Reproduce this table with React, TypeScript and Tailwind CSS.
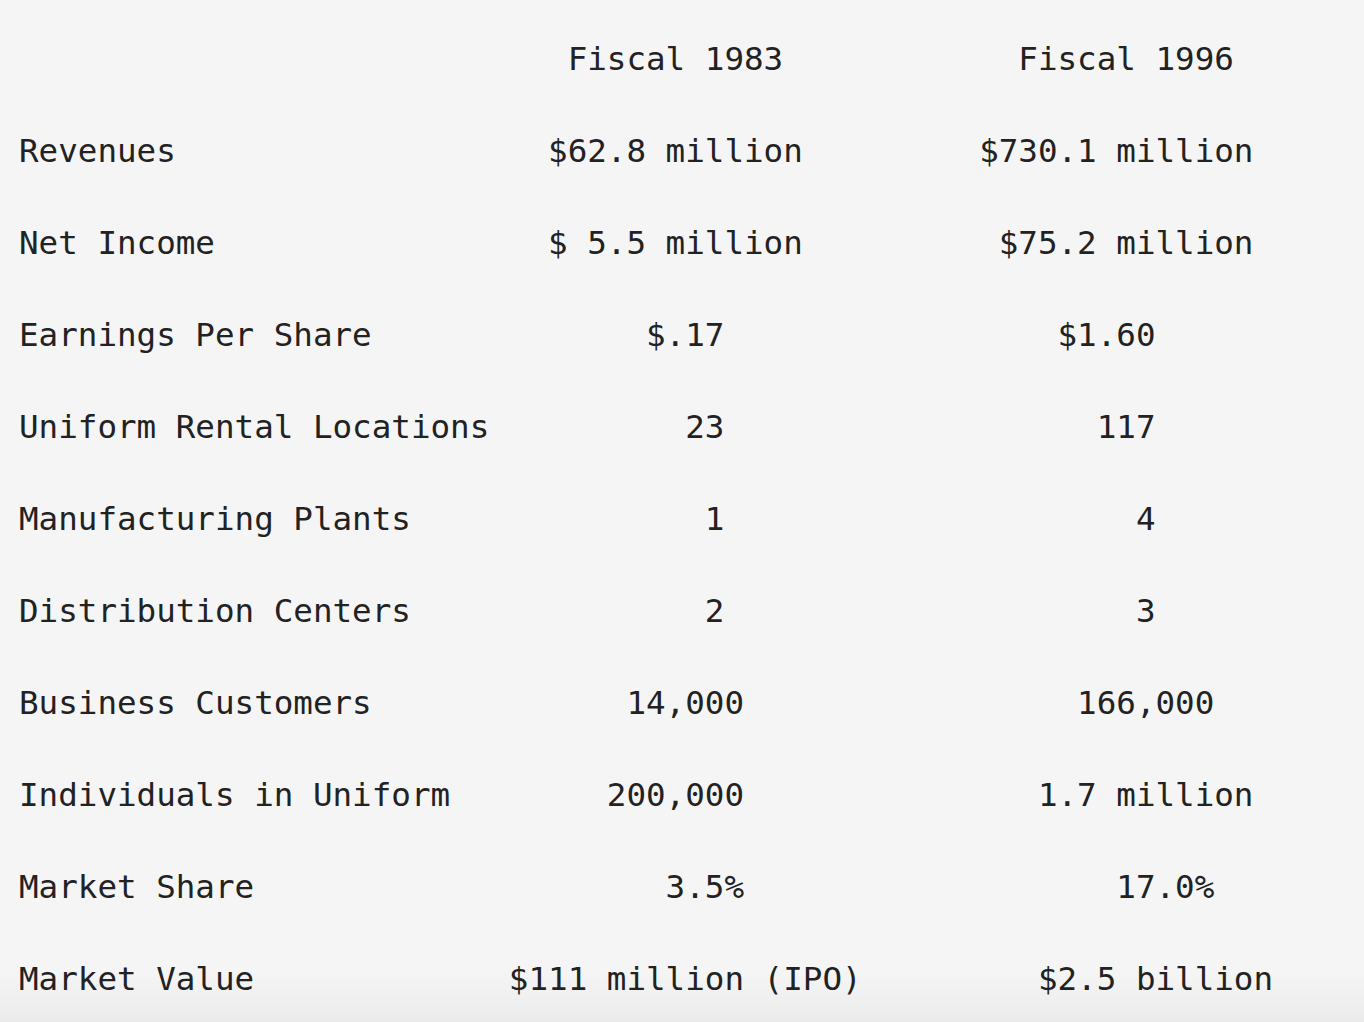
import React from "react";

type Row = { label: string; a: string; b: string };

// column text is padded with spaces, the way the original monospace table was typed
const rows: Row[] = [
    { label: "", a: "   Fiscal 1983", b: "  Fiscal 1996" },
    { label: "Revenues", a: "  $62.8 million", b: "$730.1 million" },
    { label: "Net Income", a: "  $ 5.5 million", b: " $75.2 million" },
    { label: "Earnings Per Share", a: "       $.17", b: "    $1.60" },
    { label: "Uniform Rental Locations", a: "         23", b: "      117" },
    { label: "Manufacturing Plants", a: "          1", b: "        4" },
    { label: "Distribution Centers", a: "          2", b: "        3" },
    { label: "Business Customers", a: "      14,000", b: "     166,000" },
    { label: "Individuals in Uniform", a: "     200,000", b: "   1.7 million" },
    { label: "Market Share", a: "        3.5%", b: "       17.0%" },
    { label: "Market Value", a: "$111 million (IPO)", b: "   $2.5 billion" },
];

const App: React.FC = () => {
    return (
        <div className="h-[1022px] overflow-hidden bg-linear-to-b from-[#f5f5f5] from-[95%] to-[#ebebeb] pt-[13px] pl-[19px] text-[#222222]">
            <div className="font-['DejaVu_Sans_Mono',monospace] text-[32.55px] leading-[92px] whitespace-pre">
                {rows.map((row, i) => (
                    <div key={i} className="flex">
                        <span className="w-[25ch] shrink-0">{row.label}</span>
                        <span className="w-[24ch] shrink-0">{row.a}</span>
                        <span>{row.b}</span>
                    </div>
                ))}
            </div>
        </div>
    );
};

export default App;
